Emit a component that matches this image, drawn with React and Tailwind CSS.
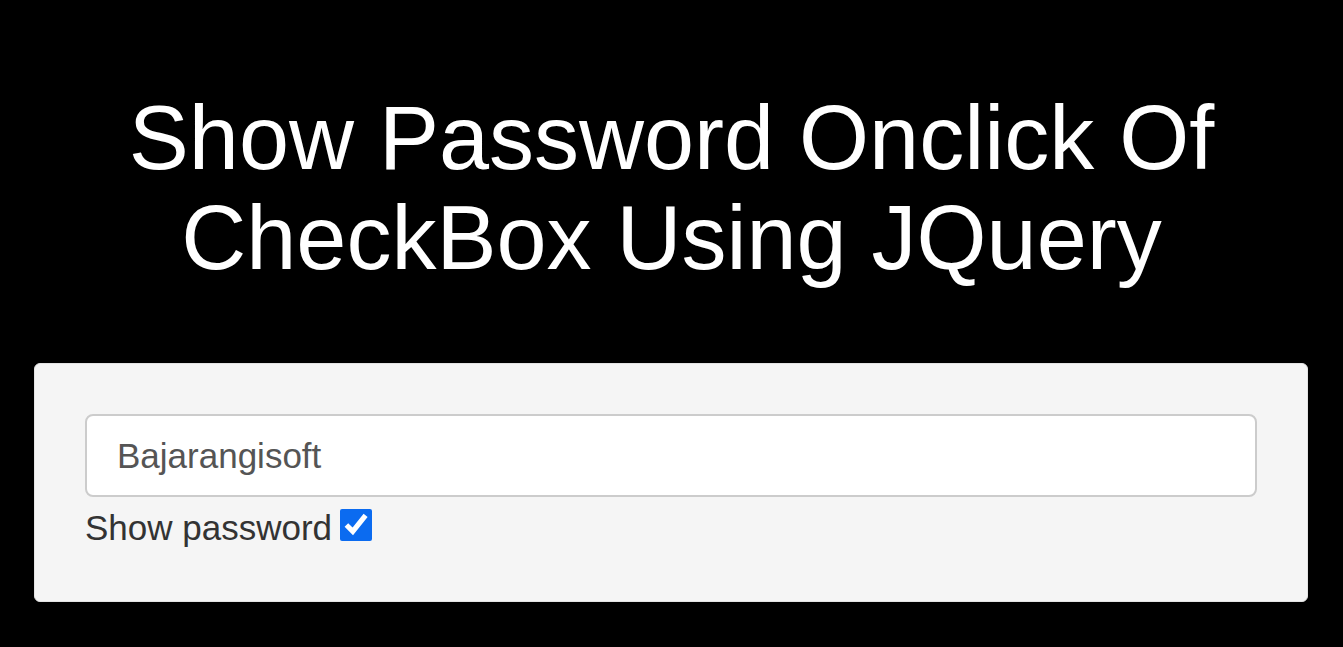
import { useState } from 'react';

export default function App() {
  const [show, setShow] = useState(true);

  return (
    <div className="min-h-[647px] bg-black font-['Liberation_Sans',Arial,sans-serif] pt-[88px]">
      <h1 className="text-center text-white text-[90px] leading-[100px] px-[100px]">
        Show Password Onclick Of CheckBox Using JQuery
      </h1>

      <div className="ml-[34px] mr-[35px] mt-[75px] bg-[#f5f5f5] border border-[#e3e3e3] rounded-[6px] px-[50px] pt-[50px] pb-[49px]">
        <input
          type={show ? 'text' : 'password'}
          defaultValue="Bajarangisoft"
          className="block w-full h-[83px] bg-white border-2 border-[#cccccc] rounded-[8px] px-[30px] text-[35px] text-[#555555] outline-none"
        />
        <label className="flex items-center mt-[7px] text-[35px] leading-[48px] text-[#333333]">
          Show password
          <input
            type="checkbox"
            checked={show}
            onChange={() => setShow(!show)}
            className="ml-[8px] -mt-[6px] w-[32px] h-[32px] accent-[#0b6bf0]"
          />
        </label>
      </div>
    </div>
  );
}
